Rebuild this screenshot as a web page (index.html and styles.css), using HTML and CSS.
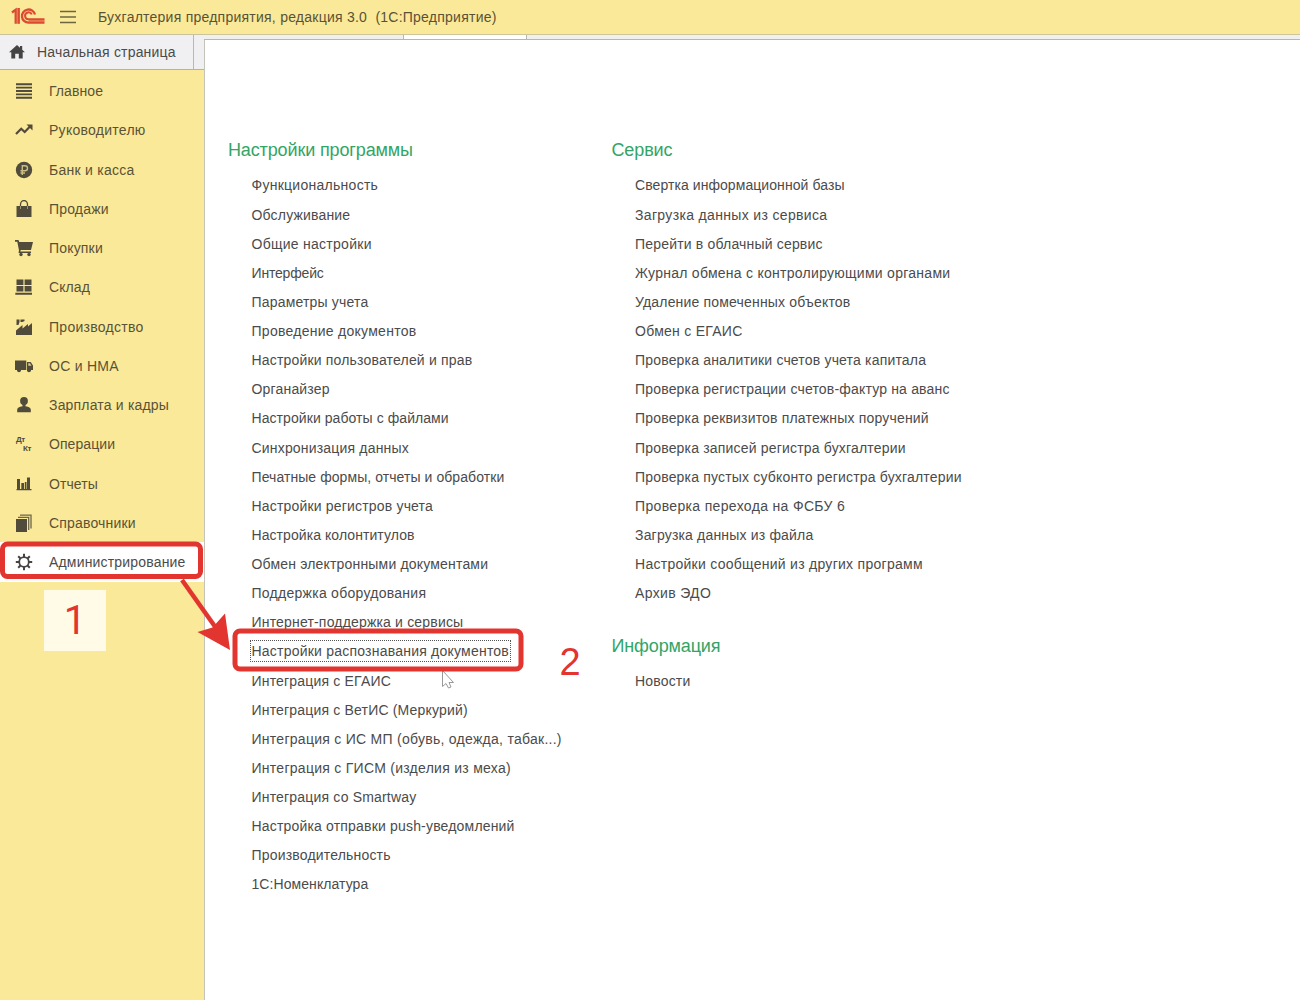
FILE: index.html
```html
<!DOCTYPE html>
<html lang="ru">
<head>
<meta charset="utf-8">
<title>Бухгалтерия предприятия, редакция 3.0</title>
<link rel="stylesheet" href="styles.css">
</head>
<body>
<div class="app">
  <header class="titlebar">
    <svg class="logo" width="34" height="18" viewBox="0 0 34 18" fill="none" stroke="#dc4a33">
      <path d="M1 5.500 4.700 2.700V16.800" stroke-width="2.300"/>
      <path d="M7.600 1V16.800" stroke-width="2.600"/>
      <path d="M24 7.500A6.600 6.600 0 1 0 17.500 15.700H33.500" stroke-width="2.300"/>
      <path d="M20.800 7.500A3.500 3.500 0 1 0 17.500 12.300H33.500" stroke-width="2"/>
      <path d="M17.500 14H33.500" stroke-width="1.600" stroke="#e5683f"/>
    </svg>
    <svg class="burger" width="16" height="14" viewBox="0 0 16 14" stroke="#6d6540" stroke-width="1.300"><path d="M0 1.500H16M0 7H16M0 12.500H16"/></svg>
    <h1 class="title">Бухгалтерия предприятия, редакция 3.0&nbsp; (1С:Предприятие)</h1>
  </header>
  <div class="body">
    <aside class="side">
      <div class="home">
        <svg width="16" height="14" viewBox="0 0 16 14" fill="#444"><path d="M8 0 11 2.700V1H13.200V4.700L16 7.300H13.700V13.500H9.800V8.800H6.200V13.500H2.300V7.300H0Z"/></svg>
        <span>Начальная страница</span>
      </div>
      <nav class="menu">
        <a class="item tight"><svg class="ic" viewBox="0 0 18 18"><path d="M1 2.200H17M1 5.600H17M1 9H17M1 12.400H17M1 15.800H17" stroke="#514b3c" stroke-width="1.900"/></svg><span>Главное</span></a>
        <a class="item wide"><svg class="ic" viewBox="0 0 18 18"><path d="M1 13 6.200 7.700 9.700 11 15.500 5" fill="none" stroke="#514b3c" stroke-width="2.200"/><path d="M11.500 3.500H17.500V9.500Z"/></svg><span>Руководителю</span></a>
        <a class="item wide"><svg class="ic" viewBox="0 0 18 18"><circle cx="9" cy="9" r="8.200"/><path d="M7.300 14V4.700H10A2.500 2.500 0 0 1 10 9.700H5.500M5.500 12H10" fill="none" stroke="#c9bd88" stroke-width="1.400"/></svg><span>Банк и касса</span></a>
        <a class="item"><svg class="ic" viewBox="0 0 18 18"><path d="M1.500 6H16.500V17H1.500Z"/><path d="M5.500 9V4.500A3.500 4 0 0 1 12.500 4.500V9" fill="none" stroke="#514b3c" stroke-width="1.300"/><path d="M5.500 6V9M12.500 6V9" stroke="#a1956c"/></svg><span>Продажи</span></a>
        <a class="item"><svg class="ic" viewBox="0 0 18 18"><path d="M0 1H3.500L4.300 3H18L16 11H5.800L5.300 12.500H16V14H3.500L4 11.500 2.300 2.700H0Z"/><circle cx="6" cy="15.500" r="1.700"/><circle cx="14" cy="15.500" r="1.700"/></svg><span>Покупки</span></a>
        <a class="item tight"><svg class="ic" viewBox="0 0 18 18"><path d="M1.500 1.500H8.400V7H1.500ZM9.600 1.500H16.500V7H9.600ZM1.500 8H8.400V13.500H1.500ZM9.600 8H16.500V13.500H9.600ZM.3 14.800H17V16.700H.3Z"/></svg><span>Склад</span></a>
        <a class="item wide"><svg class="ic" viewBox="0 0 18 18"><path d="M1 17V12.500L7.500 7V10.500L13 6V8.500L17 5V17ZM1.500 1.500H4.500V4L3.500 7H1.500ZM5.500 1.500H9.500V3L7.500 4H5.500Z"/></svg><span>Производство</span></a>
        <a class="item wide"><svg class="ic" viewBox="0 0 18 18"><path d="M0 3.500H11.300V13H0ZM12 5H15.700L18 8.500V13H12Z"/><path d="M13.300 6.300H15L16.500 8.800H13.300Z" fill="#d8cb91"/><circle cx="4" cy="13.300" r="2"/><circle cx="14" cy="13.300" r="2"/></svg><span>ОС и НМА</span></a>
        <a class="item"><svg class="ic" viewBox="0 0 18 18"><circle cx="9" cy="5" r="3.900"/><path d="M7.500 8H10.500V10.200Q15.800 11 15.800 13.500V16.300H2.200V13.500Q2.200 11 7.500 10.200Z"/></svg><span>Зарплата и кадры</span></a>
        <a class="item tight"><svg class="ic dk" viewBox="0 0 18 18"><text x="1" y="7">Дт</text><text x="8" y="16">Кт</text></svg><span>Операции</span></a>
        <a class="item tight"><svg class="ic" viewBox="0 0 18 18"><path d="M2 4H5V14H2ZM6.300 8H9V14H6.300ZM9.800 7H11.500V14H9.800ZM12 2.500H15V14H12ZM1.500 14H16.500V15.200H1.500Z"/></svg><span>Отчеты</span></a>
        <a class="item"><svg class="ic" viewBox="0 0 18 18"><path d="M1 5H12V18H1Z"/><path d="M3 3.300H13.700V16M5 1.200H16V14.500" fill="none" stroke="#6d6548" stroke-width="1.300"/></svg><span>Справочники</span></a>
        <a class="item active"><svg class="ic" viewBox="0 0 18 18"><circle cx="9" cy="9" r="4.800" fill="none" stroke="#444" stroke-width="1.800"/><path d="M9 4V.8M9 14V17.200M4 9H.8M14 9H17.200M5.500 5.500 3.200 3.200M12.500 12.500 14.800 14.800M5.500 12.500 3.200 14.800M12.500 5.500 14.800 3.200" stroke="#444" stroke-width="2"/></svg><span>Администрирование</span></a>
      </nav>
    </aside>
    <div class="work">
      <div class="tabs"><div class="tab"></div></div>
      <main class="content">
        <section class="col">
          <h2>Настройки программы</h2>
          <ul>
            <li class="wide">Функциональность</li>
            <li>Обслуживание</li>
            <li class="wide">Общие настройки</li>
            <li class="narrow">Интерфейс</li>
            <li>Параметры учета</li>
            <li class="wide">Проведение документов</li>
            <li>Настройки пользователей и прав</li>
            <li>Органайзер</li>
            <li class="tight">Настройки работы с файлами</li>
            <li>Синхронизация данных</li>
            <li class="tight">Печатные формы, отчеты и обработки</li>
            <li>Настройки регистров учета</li>
            <li class="tight">Настройка колонтитулов</li>
            <li>Обмен электронными документами</li>
            <li class="wide">Поддержка оборудования</li>
            <li>Интернет-поддержка и сервисы</li>
            <li><span class="focus">Настройки распознавания документов</span></li>
            <li>Интеграция с ЕГАИС</li>
            <li>Интеграция с ВетИС (Меркурий)</li>
            <li class="wide">Интеграция с ИС МП (обувь, одежда, табак...)</li>
            <li class="wide">Интеграция с ГИСМ (изделия из меха)</li>
            <li>Интеграция со Smartway</li>
            <li>Настройка отправки push-уведомлений</li>
            <li>Производительность</li>
            <li class="tight">1С:Номенклатура</li>
          </ul>
        </section>
        <div class="col">
          <section>
            <h2>Сервис</h2>
            <ul>
              <li class="tight">Свертка информационной базы</li>
              <li class="wider">Загрузка данных из сервиса</li>
              <li>Перейти в облачный сервис</li>
              <li class="wide">Журнал обмена с контролирующими органами</li>
              <li>Удаление помеченных объектов</li>
              <li class="wide">Обмен с ЕГАИС</li>
              <li>Проверка аналитики счетов учета капитала</li>
              <li>Проверка регистрации счетов-фактур на аванс</li>
              <li>Проверка реквизитов платежных поручений</li>
              <li>Проверка записей регистра бухгалтерии</li>
              <li>Проверка пустых субконто регистра бухгалтерии</li>
              <li class="wider">Проверка перехода на ФСБУ 6</li>
              <li>Загрузка данных из файла</li>
              <li class="wide">Настройки сообщений из других программ</li>
              <li class="wider">Архив ЭДО</li>
            </ul>
          </section>
          <section class="info">
            <h2>Информация</h2>
            <ul><li>Новости</li></ul>
          </section>
        </div>
      </main>
    </div>
  </div>
  <div class="step one">1</div>
  <div class="step two">2</div>
  <svg class="marks" width="1300" height="1000" viewBox="0 0 1300 1000">
    <path d="M442.500 670.500V686.500L446 683.500 448.500 688 451 687 449 682.500H453.500Z" fill="#fff" stroke="#999" stroke-width="1"/>
    <g fill="none" stroke="#e2352f" stroke-width="5">
      <rect x="2.500" y="544" width="198" height="32.500" rx="5"/>
      <rect x="235" y="631" width="286" height="38" rx="5"/>
      <path d="M182 580 216 628" stroke-width="4.500"/>
    </g>
    <path d="M230 650 197.500 632 212.500 627.500 225 613.500Z" fill="#e2352f"/>
  </svg>
</div>
</body>
</html>
```
FILE: styles.css
```css
* { box-sizing: border-box; }
body { margin: 0; font-family: "Liberation Sans", Arial, sans-serif; font-size: 14px; letter-spacing: .18px; color: #4b4b4b; background: #fff; }
h1, h2, ul { margin: 0; padding: 0; font-weight: normal; list-style: none; }
.app { position: relative; width: 1300px; height: 1000px; overflow: hidden; display: flex; flex-direction: column; }
.titlebar { height: 34px; flex: none; background: #fae998; display: flex; align-items: center; padding-left: 11px; }
.logo { margin-top: -2px; }
.burger { margin-left: 15px; }
.title { font-size: 14px; line-height: 20px; margin-left: 22px; letter-spacing: .24px; color: #5a5236; white-space: nowrap; }
.body { flex: 1; display: flex; min-height: 0; }
.side { width: 204px; background: #fae998; display: flex; flex-direction: column; }
.home { height: 36px; flex: none; background: linear-gradient(to right, #f0f0f2 193px, #b9b9b0 193px, #b9b9b0 194px, #f0f0f2 194px); border-top: 1px solid #c9c3a0; border-bottom: 1px solid #b9b399; display: flex; align-items: center; padding-left: 9px; gap: 12px; white-space: nowrap; }
.menu { display: flex; flex-direction: column; padding-top: 1.4px; }
.item { height: 39.25px; display: flex; align-items: center; padding-left: 15px; gap: 16px; color: #5a5236; white-space: nowrap; }
.item.active { background: #fff; color: #4b4b4b; }
.ic { width: 18px; height: 18px; flex: none; fill: #514b3c; }
.dk { font-size: 8px; font-weight: bold; letter-spacing: -.5px; overflow: visible; }
.work { flex: 1; display: flex; flex-direction: column; }
.tabs { height: 6px; flex: none; background: #f0f0ee; border-top: 1px solid #cdc59c; border-bottom: 1px solid #b6b6b6; padding-left: 199px; }
.tab { width: 124px; height: 4px; background: #fff; border: solid #b6b6b6; border-width: 0 1px; }
.content { flex: 1; display: flex; border-left: 1px solid #c4c4b8; background: #fff; padding: 97.4px 0 0 23px; }
.col { width: 383.5px; }
h2 { font-size: 18px; line-height: 26px; height: 34px; letter-spacing: -.13px; color: #32a566; white-space: nowrap; }
ul { padding-left: 23.5px; }
li { height: 29.14px; line-height: 29px; white-space: nowrap; }
.info { padding-top: 24.5px; }
.narrow { letter-spacing: -.18px; }
.tight { letter-spacing: .07px; }
.wide { letter-spacing: .27px; }
.wider { letter-spacing: .34px; }
.focus { display: inline-block; line-height: 18px; letter-spacing: .22px; outline: 1px dotted #555; outline-offset: 1px; }
.step { position: absolute; color: #e2352f; font-size: 38px; letter-spacing: 0; text-align: center; }
.one { left: 44px; top: 590px; width: 62px; height: 61px; line-height: 61px; font-family: Roboto, sans-serif; font-size: 40px; background: #fffbe6; }
.two { left: 552px; top: 638px; width: 36px; height: 48px; line-height: 48px; }
.marks { position: absolute; left: 0; top: 0; }
```
